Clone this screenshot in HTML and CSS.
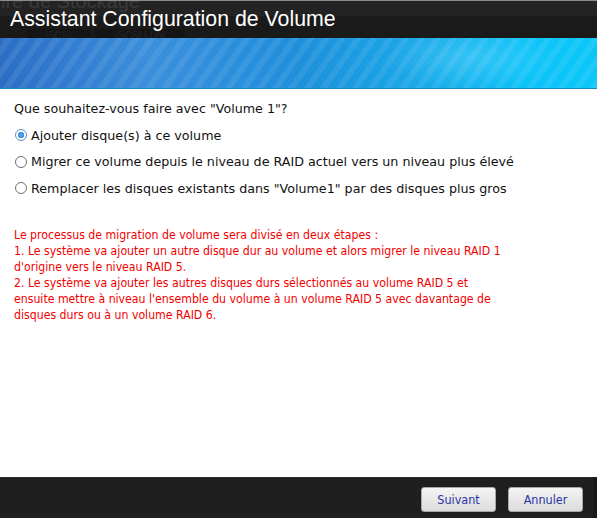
FILE: index.html
```html
<!DOCTYPE html>
<html lang="fr">
<head>
	<meta charset="UTF-8">
	<title>Assistant Configuration de Volume</title>
	<link rel="stylesheet" href="styles.css">
</head>
<body>
	<div class="dialog">
		<div class="titlebar">
			<span class="behind">ire de Stockage</span>
			<span class="tab tab1">iSCSI</span>
			<span class="tab tab2">iSCSI LUN</span>
			<h1>Assistant Configuration de Volume</h1>
		</div>
		<div class="banner"></div>
		<div class="content">
			<p class="question">Que souhaitez-vous faire avec "Volume 1"?</p>
			<label class="opt"><span class="radio checked"></span>Ajouter disque(s) à ce volume</label>
			<label class="opt"><span class="radio"></span>Migrer ce volume depuis le niveau de RAID actuel vers un niveau plus élevé</label>
			<label class="opt"><span class="radio"></span>Remplacer les disques existants dans "Volume1" par des disques plus gros</label>
			<p class="warn">Le processus de migration de volume sera divisé en deux étapes :<br>
			1. Le système va ajouter un autre disque dur au volume et alors migrer le niveau RAID 1 d'origine vers le niveau RAID 5.<br>
			2. Le système va ajouter les autres disques durs sélectionnés au volume RAID 5 et ensuite mettre à niveau l'ensemble du volume à un volume RAID 5 avec davantage de disques durs ou à un volume RAID 6.</p>
		</div>
		<div class="footer">
			<button class="btn">Suivant</button>
			<button class="btn">Annuler</button>
		</div>
	</div>
</body>
</html>
```

FILE: styles.css
```css
* {
	margin: 0;
	padding: 0;
	box-sizing: border-box;
}

body {
	width: 597px;
	height: 518px;
	overflow: hidden;
	background: #fff;
	font-family: "DejaVu Sans", Verdana, sans-serif;
}

.dialog {
	display: flex;
	flex-direction: column;
	height: 518px;
}

/* barre de titre */
.titlebar {
	position: relative;
	height: 38px;
	border-top: 1px solid #8c8c8c;
	background: linear-gradient(#232323 0, #232323 15px, #1a1a1a 15px);
	overflow: hidden;
}

.behind {
	position: absolute;
	left: 1px;
	top: -11px;
	font: 20px "Liberation Sans", Arial, sans-serif;
	color: #3a3a3a;
}

.tab {
	position: absolute;
	top: 28px;
	height: 12px;
	font: 10px "Liberation Sans", Arial, sans-serif;
	line-height: 14px;
	color: #252525;
	background: #151515;
	text-align: center;
}

.tab1 { left: 27px; width: 63px; }
.tab2 { left: 95px; width: 90px; }

.titlebar h1 {
	position: relative;
	padding: 6px 0 0 10px;
	font: normal 21.3px "Liberation Sans", Arial, sans-serif;
	color: #fff;
}

/* bandeau bleu */
.banner {
	height: 51px;
	background:
		repeating-linear-gradient(-55deg, rgba(255,255,255,0.08) 0, rgba(255,255,255,0.08) 6px, rgba(255,255,255,0) 6px, rgba(255,255,255,0) 13px),
		radial-gradient(ellipse 90px 30px at 470px 20px, rgba(120,220,255,0.35), rgba(120,220,255,0)),
		linear-gradient(to right, #2a6ec6 0%, #3b8fdc 25%, #1f8fdc 50%, #1aa8e8 70%, #0cc3f8 88%, #0cc6fa 100%);
	border-bottom: 1px solid #1d86c8;
}

/* contenu */
.content {
	flex: 1;
	padding: 12px 14px 0 14px;
	font-size: 12.7px;
	color: #111;
}

.question {
	line-height: 16px;
	margin-bottom: 5px;
}

.opt {
	display: flex;
	align-items: center;
	height: 26.5px;
	margin-left: 1px;
	white-space: nowrap;
}

.radio {
	flex: none;
	width: 12px;
	height: 12px;
	margin-right: 4px;
	border: 1px solid #6f6f6f;
	border-radius: 50%;
	background: #fff;
}

.radio.checked {
	border-color: #5d8fc0;
	background: radial-gradient(circle, #5aa8ee 0, #3d8fe0 3px, #fff 3.5px);
}

.warn {
	max-width: 497px;
	margin-top: 25px;
	font-family: "DejaVu Sans Condensed", "DejaVu Sans", sans-serif;
	font-stretch: condensed;
	font-size: 12.2px;
	line-height: 16px;
	color: #f20000;
}

/* pied */
.footer {
	display: flex;
	justify-content: flex-end;
	gap: 12px;
	height: 41px;
	padding: 9px 10px 0 0;
	background: #1f1f1f;
	border-top: 1px solid #2c2c2c;
	border-right: 4px solid #181818;
}

.btn {
	width: 75px;
	height: 25px;
	border: 1px solid #a8a8a8;
	border-radius: 3px;
	background: linear-gradient(#f4f4f4, #dcdcdc);
	font-family: "DejaVu Sans Condensed", "DejaVu Sans", sans-serif;
	font-stretch: condensed;
	font-size: 12.5px;
	color: #2a35a8;
}
```
